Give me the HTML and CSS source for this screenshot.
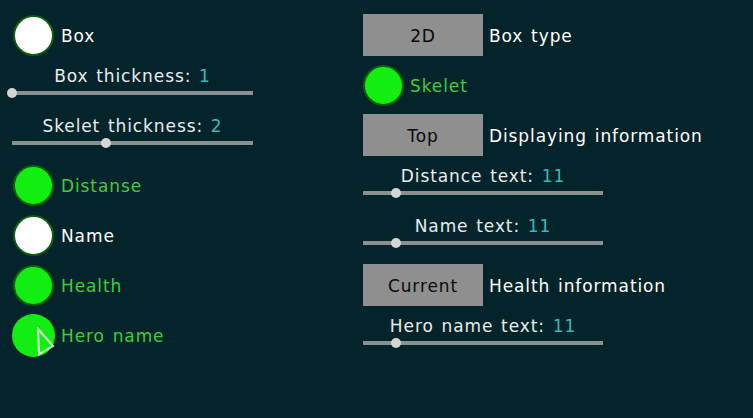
FILE: index.html
```html
<!DOCTYPE html>
<html>
<head>
<meta charset="utf-8">
<link rel="stylesheet" href="styles.css">
</head>
<body>
<div class="page">
  <div class="col col-left">
    <div class="row"><span class="check white"></span><span class="label">Box</span></div>
    <div class="srow">
      <div class="slabel">Box thickness: <span class="val">1</span></div>
      <div class="track"><span class="thumb" style="left:0%"></span></div>
    </div>
    <div class="srow">
      <div class="slabel">Skelet thickness: <span class="val">2</span></div>
      <div class="track"><span class="thumb" style="left:39%"></span></div>
    </div>
    <div class="row"><span class="check on"></span><span class="label green">Distanse</span></div>
    <div class="row"><span class="check white"></span><span class="label">Name</span></div>
    <div class="row"><span class="check on"></span><span class="label green">Health</span></div>
    <div class="row hover-row">
      <span class="check on hover"></span><span class="label green">Hero name</span>
      <svg class="cursor" width="20" height="30" viewBox="0 0 20 30"><polygon points="2,2 17,19 3,27" fill="none" stroke="#d8ffd0" stroke-width="2" stroke-linejoin="miter"/></svg>
    </div>
  </div>
  <div class="col col-right">
    <div class="row"><span class="btn">2D</span><span class="label">Box type</span></div>
    <div class="row"><span class="check on"></span><span class="label green">Skelet</span></div>
    <div class="row"><span class="btn">Top</span><span class="label">Displaying information</span></div>
    <div class="srow">
      <div class="slabel">Distance text: <span class="val">11</span></div>
      <div class="track"><span class="thumb" style="left:13.75%"></span></div>
    </div>
    <div class="srow">
      <div class="slabel">Name text: <span class="val">11</span></div>
      <div class="track"><span class="thumb" style="left:13.75%"></span></div>
    </div>
    <div class="row"><span class="btn">Current</span><span class="label">Health information</span></div>
    <div class="srow">
      <div class="slabel">Hero name text: <span class="val">11</span></div>
      <div class="track"><span class="thumb" style="left:13.75%"></span></div>
    </div>
  </div>
</div>
</body>
</html>
```
FILE: styles.css
```css
html, body {
  margin: 0;
  padding: 0;
  background: #03242a;
  height: 100%;
}
body {
  font-family: "DejaVu Sans", sans-serif;
  font-size: 17px;
  letter-spacing: 0.9px;
  word-spacing: 1.5px;
  color: #ffffff;
}
.page {
  display: flex;
  padding-top: 10px;
}
.col-left {
  margin-left: 12px;
  width: 241px;
}
.col-right {
  margin-left: 110px;
  width: 360px;
}
.row {
  height: 50px;
  display: flex;
  align-items: center;
  position: relative;
}
.label {
  padding-top: 1px;
  margin-left: 7px;
}
.check {
  width: 41px;
  height: 41px;
  box-sizing: border-box;
  border-radius: 50%;
  border: 2px solid #0b5e0b;
  flex: none;
}
.col-left .check { margin-left: 1px; }
.check.white { background: #ffffff; }
.check.on { background: #12ee12; }
.check.hover {
  width: 43px;
  height: 43px;
  border: none;
  margin-left: 0;
}
.col-left .hover-row .label { margin-left: 6px; }
.col-right .label { margin-left: 6px; }
.green { color: #3dcf3d; }
.btn {
  width: 120px;
  height: 42px;
  background: #8f8f8f;
  color: #0a0a0a;
  display: flex;
  align-items: center;
  justify-content: center;
  flex: none;
  padding-top: 1px;
  box-sizing: border-box;
}
.srow {
  height: 50px;
  display: flex;
  flex-direction: column;
  align-items: stretch;
}
.col-right .srow { width: 240px; }
.slabel {
  height: 30px;
  line-height: 32px;
  text-align: center;
  color: #e8ecec;
}
.val { color: #3ab8b8; }
.track {
  position: relative;
  height: 4px;
  margin-top: 1px;
  background: #8a8f8f;
}
.thumb {
  position: absolute;
  top: -3px;
  width: 10px;
  height: 10px;
  margin-left: -5px;
  border-radius: 50%;
  background: #d4d6d6;
}
.cursor {
  position: absolute;
  left: 24px;
  top: 17px;
}
```
